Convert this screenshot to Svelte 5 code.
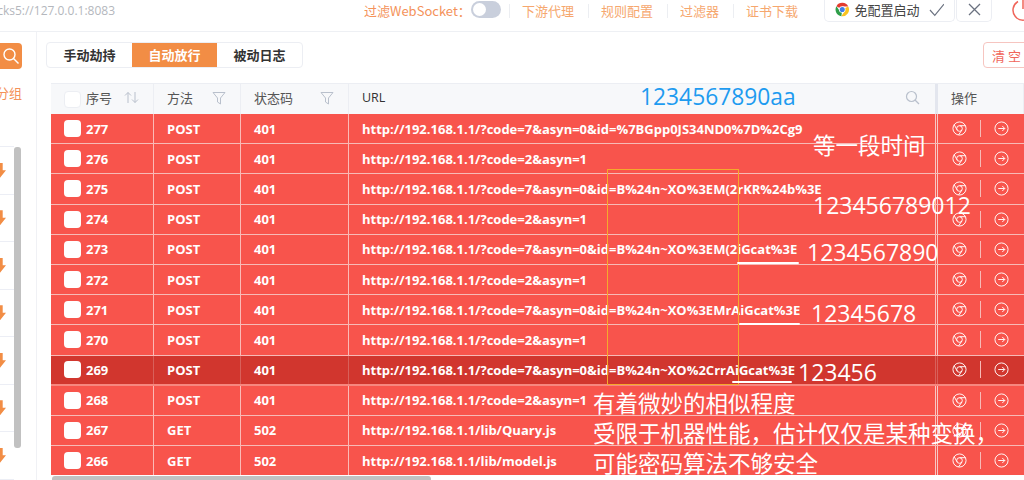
<script>
  const long = 'http://192.168.1.1/?code=7&asyn=0&id=';
  const short = 'http://192.168.1.1/?code=2&asyn=1';
  const rows = [
    { id: 277, method: 'POST', code: 401, url: long + '%7BGpp0JS34ND0%7D%2Cg9' },
    { id: 276, method: 'POST', code: 401, url: short },
    { id: 275, method: 'POST', code: 401, url: long + 'B%24n~XO%3EM(2rKR%24b%3E' },
    { id: 274, method: 'POST', code: 401, url: short },
    { id: 273, method: 'POST', code: 401, url: long + 'B%24n~XO%3EM(2iGcat%3E' },
    { id: 272, method: 'POST', code: 401, url: short },
    { id: 271, method: 'POST', code: 401, url: long + 'B%24n~XO%3EMrAiGcat%3E' },
    { id: 270, method: 'POST', code: 401, url: short },
    { id: 269, method: 'POST', code: 401, url: long + 'B%24n~XO%2CrrAiGcat%3E', active: true },
    { id: 268, method: 'POST', code: 401, url: short },
    { id: 267, method: 'GET', code: 502, url: 'http://192.168.1.1/lib/Quary.js' },
    { id: 266, method: 'GET', code: 502, url: 'http://192.168.1.1/lib/model.js' }
  ];
  const notes = [
    { text: '等一段时间', x: 813, y: 130, cls: 'cjk' },
    { text: '123456789012', x: 813, y: 191, cls: 'num' },
    { text: '1234567890', x: 807, y: 238, cls: 'num' },
    { text: '12345678', x: 811, y: 299, cls: 'num' },
    { text: '123456', x: 798, y: 358, cls: 'num' },
    { text: '有着微妙的相似程度', x: 593, y: 388, cls: 'cjk' },
    { text: '受限于机器性能，估计仅仅是某种变换，', x: 593, y: 418, cls: 'cjk' },
    { text: '可能密码算法不够安全', x: 593, y: 448, cls: 'cjk' }
  ];
  const sideItems = [0, 1, 2, 3, 4, 5, 6];
</script>

<div class="page">
  <header class="topbar">
    <div class="addr"><span>socks5://127.0.0.1:8083</span></div>
    <div class="actions">
      <span class="ws">过滤WebSocket：</span>
      <span class="switch"><i></i></span>
      <a>下游代理</a>
      <a>规则配置</a>
      <a>过滤器</a>
      <a>证书下载</a>
    </div>
    <div class="chrome-btn">
      <svg width="15" height="15" viewBox="0 0 16 16">
        <path d="M8 8 L1.6 4.3 A7.4 7.4 0 0 1 14.6 4.7 L8 4.7Z" fill="#e33b2e" />
        <path d="M8 8 L14.6 4.7 A7.4 7.4 0 0 1 7 15.4 L10.8 9.6Z" fill="#f9c31f" />
        <path d="M8 8 L7 15.4 A7.4 7.4 0 0 1 1.6 4.3 L5.2 9.6Z" fill="#2f9e49" />
        <circle cx="8" cy="8" r="3.6" fill="#fff" />
        <circle cx="8" cy="8" r="2.8" fill="#3f7fe8" />
      </svg>
      <span>免配置启动</span>
      <svg width="16" height="14" viewBox="0 0 16 14" fill="none" stroke="#6b7280" stroke-width="1.2">
        <path d="M1 7 L6 12.5 L15.5 1" />
      </svg>
    </div>
    <div class="close-btn">
      <svg width="13" height="13" viewBox="0 0 13 13" fill="none" stroke="#6b7280" stroke-width="1.3">
        <path d="M1 1 L12 12 M12 1 L1 12" />
      </svg>
    </div>
    <div class="power">
      <svg width="24" height="22" viewBox="0 0 24 22" fill="none" stroke="#f0655a" stroke-width="1.5">
        <path d="M7 1.5 A10 10 0 1 0 17 1.5 M12 -2 V9" />
      </svg>
    </div>
  </header>

  <div class="body">
    <aside class="side">
      <div class="search">
        <svg width="18" height="18" viewBox="0 0 18 18" fill="none" stroke="#fff" stroke-width="1.4">
          <circle cx="7.5" cy="7.5" r="5.5" />
          <path d="M11.5 11.5 L16.5 16.5" />
        </svg>
      </div>
      <div class="group"><span>分组</span></div>
      <div class="list">
        {#each sideItems as i (i)}
          <div class="side-item"><span class="arrow"></span></div>
        {/each}
        <div class="side-scroll"></div>
      </div>
    </aside>

    <main class="main">
      <div class="toolbar">
        <div class="tabs">
          <span>手动劫持</span>
          <span class="on">自动放行</span>
          <span>被动日志</span>
        </div>
        <button class="clear">清 空</button>
      </div>

      <div class="table">
        <div class="row head">
          <div class="c id">
            <span class="check"></span>序号
            <svg class="sort" width="15" height="13" viewBox="0 0 15 13" fill="none" stroke="#b9c0cc" stroke-width="1">
              <path d="M4 12 V1.5 M1 4.5 L4 1.5 L7 4.5 M11 1 V11.5 M8 8.5 L11 11.5 L14 8.5" />
            </svg>
          </div>
          <div class="c method">
            方法
            <svg class="filter" width="14" height="14" viewBox="0 0 14 14" fill="none" stroke="#b9c0cc" stroke-width="1">
              <path d="M1 1.5 H13 L8.5 7 V13 L5.5 11 V7Z" />
            </svg>
          </div>
          <div class="c code">
            状态码
            <svg class="filter" width="14" height="14" viewBox="0 0 14 14" fill="none" stroke="#b9c0cc" stroke-width="1">
              <path d="M1 1.5 H13 L8.5 7 V13 L5.5 11 V7Z" />
            </svg>
          </div>
          <div class="c url">
            URL
            <svg class="glass" width="15" height="15" viewBox="0 0 15 15" fill="none" stroke="#b9c0cc" stroke-width="1.2">
              <circle cx="6.5" cy="6.5" r="5" />
              <path d="M10 10 L14 14" />
            </svg>
          </div>
          <div class="c ops">操作</div>
        </div>

        {#each rows as r (r.id)}
          <div class="row item" class:active={r.active}>
            <div class="c id"><span class="check"></span>{r.id}</div>
            <div class="c method">{r.method}</div>
            <div class="c code">{r.code}</div>
            <div class="c url">{r.url}</div>
            <div class="c ops">
              <svg width="15" height="15" viewBox="0 0 16 16" fill="none" stroke="#fff" stroke-width="1">
                <circle cx="8" cy="8" r="7" />
                <circle cx="8" cy="8" r="3" />
                <path d="M8 5 H14.5 M5.4 9.5 L2.3 3.8 M10.6 9.5 L7 14.9" />
              </svg>
              <i class="sep"></i>
              <svg width="15" height="15" viewBox="0 0 16 16" fill="none" stroke="#fff" stroke-width="1">
                <circle cx="8" cy="8" r="7" />
                <path d="M4.5 8 H11.5 M8.8 5.3 L11.5 8 L8.8 10.7" />
              </svg>
            </div>
          </div>
        {/each}
      </div>
    </main>
  </div>

  <div class="hscroll"></div>

  <!-- annotations drawn on top of the screenshot -->
  <div class="blue-note">1234567890aa</div>
  <div class="box"></div>
  <i class="stroke s1"></i>
  <i class="stroke s2"></i>
  <i class="stroke s3"></i>
  {#each notes as n (n.text)}
    <div class="note {n.cls}" style="left:{n.x}px;top:{n.y}px">{n.text}</div>
  {/each}
</div>

<style>
  :global(body) {
    margin: 0;
    background: #fff;
  }
  .page {
    position: relative;
    width: 1024px;
    height: 480px;
    overflow: hidden;
    font-family: "Noto Sans CJK SC", "Noto Sans", sans-serif;
    color: #333;
  }
  .topbar {
    display: flex;
    align-items: flex-start;
    height: 31px;
    border-bottom: 1px solid #eef0f4;
  }
  .addr {
    display: flex;
    flex: none;
    align-items: center;
    justify-content: flex-end;
    width: 115px;
    height: 21px;
    overflow: hidden;
    white-space: nowrap;
    font-family: "Open Sans", sans-serif;
    font-size: 12px;
    color: #b4b7bd;
  }
  .actions {
    display: flex;
    flex: none;
    align-items: center;
    height: 21px;
    margin-left: 249px;
    font-size: 13px;
    color: #f6a76e;
    white-space: nowrap;
  }
  .ws {
    color: #f4925a;
    width: 107px;
  }
  .switch {
    display: block;
    width: 30px;
    height: 17px;
    border-radius: 9px;
    background: #c9cfdc;
    margin: -3px 8px 0 0;
  }
  .switch i {
    display: block;
    width: 13px;
    height: 13px;
    margin: 2px;
    border-radius: 50%;
    background: #fff;
  }
  .actions a {
    padding: 0 14px 0 12px;
    border-left: 1px solid #eceef2;
    line-height: 14px;
  }
  .chrome-btn {
    display: flex;
    flex: none;
    align-items: center;
    box-sizing: border-box;
    width: 131px;
    height: 22px;
    margin-left: 12px;
    padding: 0 10px 2px;
    border: 1px solid #eceef3;
    border-top: 0;
    border-radius: 0 0 5px 5px;
    font-size: 13px;
    color: #444;
    white-space: nowrap;
  }
  .chrome-btn span {
    margin: 0 9px 0 5px;
  }
  .close-btn {
    display: flex;
    flex: none;
    align-items: center;
    justify-content: center;
    box-sizing: border-box;
    width: 36px;
    height: 22px;
    margin-left: 1px;
    padding-bottom: 2px;
    border: 1px solid #eceef3;
    border-top: 0;
    border-radius: 0 0 5px 5px;
  }
  .power {
    flex: none;
    height: 22px;
    margin-left: 19px;
  }
  .body {
    display: flex;
    height: 448px;
  }
  .side {
    width: 37px;
    flex: none;
    box-sizing: border-box;
    border-right: 1px solid #f0f1f5;
    overflow: hidden;
  }
  .search {
    display: flex;
    align-items: center;
    justify-content: center;
    width: 26px;
    height: 26px;
    margin: 11px 0 0 -4px;
    padding-left: 3px;
    background: #f28d45;
    border-radius: 4px;
    box-sizing: border-box;
  }
  .group {
    display: flex;
    justify-content: flex-end;
    width: 22px;
    margin-top: 15px;
    overflow: hidden;
    white-space: nowrap;
    font-size: 13px;
    line-height: 18px;
    color: #f4925a;
  }
  .list {
    position: relative;
    width: 14px;
    margin-top: 44px;
    border-top: 1px solid #eceef5;
  }
  .side-item {
    display: flex;
    align-items: center;
    box-sizing: border-box;
    height: 47.5px;
    border-bottom: 1px solid #eceef5;
  }
  .arrow {
    display: block;
    width: 6px;
    height: 15px;
    background: #f28d45;
    clip-path: polygon(0 0, 45% 0, 45% 50%, 100% 50%, 0 100%);
  }
  .side-scroll {
    position: absolute;
    left: 14px;
    top: 0;
    width: 7px;
    height: 301px;
    border-radius: 3px;
    background: #c1c1c1;
  }
  .main {
    flex: 1;
    min-width: 0;
  }
  .toolbar {
    display: flex;
    justify-content: space-between;
    align-items: center;
    height: 26px;
    margin: 10px 0 15px 9px;
  }
  .tabs {
    display: flex;
    border: 1px solid #eceef3;
    border-radius: 4px;
    font-size: 13px;
    font-weight: 700;
    color: #333;
  }
  .tabs span {
    width: 85px;
    line-height: 24px;
    text-align: center;
  }
  .tabs .on {
    background: #f28d45;
    color: #fff;
  }
  .clear {
    width: 50px;
    height: 26px;
    margin-right: -9px;
    padding: 0 0 0 8px;
    border: 1px solid #f6c5c0;
    border-radius: 4px;
    background: #fff;
    color: #f0655a;
    font: inherit;
    font-size: 13px;
    text-align: left;
    white-space: nowrap;
  }
  .table {
    height: 392px;
    margin-left: 14px;
    overflow: hidden;
  }
  .row {
    display: grid;
    grid-template-columns: 103px 87px 108px 589px 86px;
  }
  .head {
    height: 31px;
    background: #f7f8fa;
    border-top: 1px solid #eceef3;
    box-sizing: border-box;
    font-size: 13px;
    color: #555;
  }
  .head .c {
    padding-bottom: 3px;
    border-right: 1px solid #eceef3;
  }
  .head .check {
    margin-top: 3px;
    background: #fff;
    border: 1px solid #eceef3;
  }
  .head .url {
    color: #333;
    font-family: "Open Sans", sans-serif;
    font-size: 12.5px;
    border-right: 3px solid #e3e6ee;
  }
  .c {
    position: relative;
    display: flex;
    align-items: center;
    box-sizing: border-box;
    min-width: 0;
    white-space: nowrap;
    padding-left: 13px;
  }
  .item {
    height: 30.2px;
    background: #f8544c;
    color: #fff;
    font-family: "Open Sans", "Noto Sans CJK SC", sans-serif;
    font-size: 13px;
    font-weight: 700;
    box-sizing: border-box;
    border-bottom: 1px solid #f7bab6;
  }
  .item .c {
    border-right: 1px solid #fbbab6;
  }
  .item .url {
    border-right: 3px double #f7c7c4;
  }
  .item .ops {
    border-right: 0;
    padding-left: 14px;
    gap: 13px;
  }
  .item.active {
    background: #d1362e;
    border-bottom: 2px solid #f7877f;
  }
  .item.active .c {
    border-right-color: #d8605a;
  }
  .check {
    display: block;
    flex: none;
    width: 17px;
    height: 17px;
    margin-right: 5px;
    border-radius: 4px;
    background: #fff;
    box-sizing: border-box;
  }
  .sep {
    display: block;
    width: 1px;
    height: 17px;
    background: #f7bab6;
  }
  .sort, .filter {
    position: absolute;
    right: 14px;
  }
  .glass {
    position: absolute;
    right: 15px;
  }
  .hscroll {
    position: absolute;
    left: 52px;
    top: 476px;
    width: 379px;
    height: 6px;
    border-radius: 3px;
    background: #c1c1c1;
  }
  .blue-note {
    position: absolute;
    left: 640px;
    top: 83px;
    font-family: "Open Sans", sans-serif;
    font-size: 22.8px;
    line-height: 28px;
    color: #1e9bf0;
  }
  .box {
    position: absolute;
    left: 607px;
    top: 169px;
    width: 132px;
    height: 216px;
    border: 1px solid #f5a92c;
    box-sizing: border-box;
  }
  .stroke {
    position: absolute;
    height: 2px;
    background: #fff;
    border-radius: 1px;
  }
  .s1 { left: 737px; top: 262px; width: 62px; }
  .s2 { left: 739px; top: 323px; width: 61px; }
  .s3 { left: 732px; top: 381px; width: 60px; }
  .note {
    position: absolute;
    line-height: 28px;
    color: #fff;
    white-space: nowrap;
  }
  .num {
    font-family: "Open Sans", sans-serif;
    font-weight: 400;
    font-size: 23px;
  }
  .cjk {
    font-family: "Noto Sans CJK SC", sans-serif;
    font-weight: 400;
    font-size: 22.5px;
  }
</style>
